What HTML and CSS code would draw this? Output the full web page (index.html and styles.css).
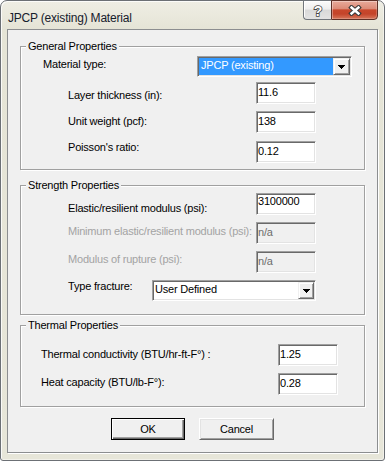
FILE: index.html
```html
<!DOCTYPE html>
<html lang="en">
<head>
<meta charset="utf-8">
<title>JPCP (existing) Material</title>
<link rel="stylesheet" href="styles.css">
</head>
<body>
<div class="window">
  <div class="titlebar">
    <span class="title">JPCP (existing) Material</span>
    <div class="caption-btns">
      <div class="cap-help">
        <svg width="12" height="15" viewBox="0 0 12 15"><text x="6" y="13" text-anchor="middle" font-family="Liberation Sans, Arial, sans-serif" font-weight="bold" font-size="14" fill="#ffffff" stroke="#474747" stroke-width="1.6" paint-order="stroke">?</text></svg>
      </div>
      <div class="cap-close">
        <svg width="14" height="11" viewBox="0 0 14 11"><path d="M3.5 2.5 L10.5 8.5 M10.5 2.5 L3.5 8.5" stroke="#3a3a3a" stroke-width="4.6" stroke-linecap="square" fill="none"/><path d="M3.5 2.5 L10.5 8.5 M10.5 2.5 L3.5 8.5" stroke="#ffffff" stroke-width="2.4" stroke-linecap="square" fill="none"/></svg>
      </div>
    </div>
  </div>
  <div class="client">
    <section class="group group--general">
      <span class="legend">General Properties</span>
      <div class="row row--material">
        <span class="label label--p2">Material type:</span>
        <div class="combo combo--material">
          <span class="combo-value combo-value--selected">JPCP (existing)</span>
          <span class="combo-btn"><svg width="7" height="4" viewBox="0 0 7 4"><path d="M0 0h7v1H0z M1 1h5v1H1z M2 2h3v1H2z M3 3h1v1H3z" fill="#000"/></svg></span>
        </div>
      </div>
      <div class="row row--indent row--gap5">
        <span class="label label--p7">Layer thickness (in):</span>
        <input class="edit" type="text" value="11.6">
      </div>
      <div class="row row--indent">
        <span class="label label--p4">Unit weight (pcf):</span>
        <input class="edit" type="text" value="138">
      </div>
      <div class="row row--indent row--gap8">
        <span class="label label--p0">Poisson's ratio:</span>
        <input class="edit" type="text" value="0.12">
      </div>
    </section>

    <section class="group group--strength">
      <span class="legend">Strength Properties</span>
      <div class="row row--indent">
        <span class="label label--p9">Elastic/resilient modulus (psi):</span>
        <input class="edit edit--high" type="text" value="3100000">
      </div>
      <div class="row row--indent">
        <span class="label label--p3 label--disabled">Minimum elastic/resilient modulus (psi):</span>
        <input class="edit" type="text" value="n/a" disabled>
      </div>
      <div class="row row--indent">
        <span class="label label--p2 label--disabled">Modulus of rupture (psi):</span>
        <input class="edit" type="text" value="n/a" disabled>
      </div>
      <div class="row row--indent row--fracture">
        <span class="label label--p0">Type fracture:</span>
        <div class="combo combo--fracture">
          <span class="combo-value">User Defined</span>
          <span class="combo-btn"><svg width="7" height="4" viewBox="0 0 7 4"><path d="M0 0h7v1H0z M1 1h5v1H1z M2 2h3v1H2z M3 3h1v1H3z" fill="#000"/></svg></span>
        </div>
      </div>
    </section>

    <section class="group group--thermal">
      <span class="legend">Thermal Properties</span>
      <div class="row row--thermal">
        <span class="label label--p4">Thermal conductivity (BTU/hr-ft-F°) :</span>
        <input class="edit" type="text" value="1.25">
      </div>
      <div class="row row--thermal">
        <span class="label label--p3">Heat capacity (BTU/lb-F°):</span>
        <input class="edit" type="text" value="0.28">
      </div>
    </section>

    <div class="buttons">
      <button class="btn btn--default" type="button">OK</button>
      <button class="btn" type="button">Cancel</button>
    </div>
  </div>
</div>
</body>
</html>
```

FILE: styles.css
```css
body {
  margin: 0;
  background: #ffffff;
  font-family: "Liberation Sans", Arial, sans-serif;
}

.window {
  box-sizing: border-box;
  width: 385px;
  height: 461px;
  border: 1px solid #6c7075;
  border-radius: 7px 7px 3px 3px;
  background: linear-gradient(to bottom, #efeee4 0px, #e5e4d6 28px, #e7e6d9 100%);
  box-shadow: inset 1px 1px 0 rgba(255, 255, 255, 0.8), inset -1px -1px 0 rgba(255, 255, 255, 0.45);
  display: flex;
  flex-direction: column;
  position: relative;
}

.titlebar {
  box-sizing: border-box;
  height: 28px;
  flex: none;
  padding: 7px 0 0 7px;
}

.title {
  font-size: 12px;
  line-height: 15px;
  letter-spacing: -0.2px;
  color: #16202c;
  white-space: nowrap;
}

.caption-btns {
  position: absolute;
  top: -1px;
  right: 6px;
  display: flex;
}

.cap-help {
  box-sizing: border-box;
  width: 28px;
  height: 20px;
  border: 1px solid #71767c;
  border-right: none;
  border-radius: 0 0 0 4px;
  background: linear-gradient(to bottom, #fbfbfb 0%, #eeeeee 45%, #d9d9d9 50%, #e3e3e3 100%);
  box-shadow: inset 1px 1px 0 rgba(255, 255, 255, 0.9);
  display: flex;
  align-items: center;
  justify-content: center;
}

.cap-close {
  box-sizing: border-box;
  width: 47px;
  height: 20px;
  border: 1px solid #5e3027;
  border-radius: 0 0 4px 0;
  background: linear-gradient(to bottom, #e8aa9b 0%, #dc8b78 42%, #c8472c 50%, #c4442a 72%, #d7765a 100%);
  box-shadow: inset 1px 1px 0 rgba(255, 255, 255, 0.35), inset -1px -1px 0 rgba(255, 255, 255, 0.2);
  display: flex;
  align-items: center;
  justify-content: center;
}

.client {
  flex: 1;
  margin: 0 6px 7px 6px;
  border: 1px solid #8c8e90;
  box-shadow: 1px 1px 0 #ffffff;
  background: #f0f0f0;
  padding: 0 12px;
  display: flex;
  flex-direction: column;
}

.group {
  position: relative;
  border: 1px solid #a0a0a0;
  box-shadow: inset 1px 1px 0 #ffffff, 1px 1px 0 #ffffff;
  display: flex;
  flex-direction: column;
}

.group--general {
  margin-top: 16px;
  padding: 9px 0 6px;
}

.group--strength {
  margin-top: 15px;
  padding: 7px 0 13px;
}

.group--thermal {
  margin-top: 10px;
  padding: 18px 0 11px;
}

.legend {
  position: absolute;
  top: -7px;
  left: 5px;
  padding: 0 2px;
  background: #f0f0f0;
  font-size: 11px;
  line-height: 13px;
  letter-spacing: -0.2px;
  white-space: nowrap;
  color: #000000;
}

.row {
  display: flex;
  align-items: flex-start;
}

.row + .row {
  margin-top: 7px;
}

.row + .row--gap5 {
  margin-top: 5px;
}

.row + .row--gap8 {
  margin-top: 8px;
}

.label {
  flex: none;
  font-size: 11px;
  line-height: 13px;
  letter-spacing: -0.2px;
  white-space: nowrap;
  color: #000000;
}

.label--disabled {
  color: #a3a3a3;
}

.label--p0 { padding-top: 0; }
.label--p2 { padding-top: 2px; }
.label--p3 { padding-top: 3px; }
.label--p4 { padding-top: 4px; }
.label--p7 { padding-top: 7px; }
.label--p9 { padding-top: 9px; }

.row--material {
  padding-left: 22px;
}

.row--material .label {
  width: 154px;
}

.row--indent {
  padding-left: 47px;
}

.row--indent .label {
  width: 188px;
}

.row--fracture .label {
  width: 84px;
}

.row--thermal {
  padding-left: 20px;
}

.row--thermal .label {
  width: 237px;
}

.edit {
  box-sizing: border-box;
  flex: none;
  width: 60px;
  height: 22px;
  margin: 0;
  padding: 2px 1px 5px 1px;
  border: 1px solid;
  border-color: #a0a0a0 #ffffff #ffffff #a0a0a0;
  box-shadow: inset 1px 1px 0 #696969, inset -1px -1px 0 #e3e3e3;
  border-radius: 0;
  background: #ffffff;
  font-family: inherit;
  font-size: 11px;
  line-height: 13px;
  letter-spacing: -0.2px;
  color: #000000;
  outline: none;
}

.edit--high {
  padding-top: 0;
  padding-bottom: 7px;
}

.edit:disabled {
  background: #f0f0f0;
  color: #6d6d6d;
  opacity: 1;
}

.combo {
  box-sizing: border-box;
  flex: none;
  display: flex;
  height: 21px;
  padding: 1px;
  border: 1px solid;
  border-color: #a0a0a0 #ffffff #ffffff #a0a0a0;
  box-shadow: inset 1px 1px 0 #696969, inset -1px -1px 0 #e3e3e3;
  background: #ffffff;
}

.combo--material {
  width: 155px;
}

.combo--fracture {
  width: 164px;
}

.combo-value {
  flex: 1;
  min-width: 0;
  padding: 1px 0 0 2px;
  font-size: 11px;
  line-height: 13px;
  letter-spacing: -0.2px;
  white-space: nowrap;
  overflow: hidden;
  color: #000000;
}

.combo-value--selected {
  background: #3399ff;
  color: #ffffff;
}

.combo--fracture .combo-value {
  padding-left: 1px;
}

.combo-btn {
  box-sizing: border-box;
  flex: none;
  width: 16px;
  display: flex;
  align-items: center;
  justify-content: center;
  background: #f0f0f0;
  border: 1px solid;
  border-color: #f0f0f0 #696969 #696969 #f0f0f0;
  box-shadow: inset 1px 1px 0 #ffffff, inset -1px -1px 0 #a0a0a0;
}

.combo--material .combo-btn {
  width: 17px;
}

.combo-btn svg {
  display: block;
}

.buttons {
  display: flex;
  justify-content: center;
  gap: 14px;
  margin-top: 11px;
}

.btn {
  box-sizing: border-box;
  width: 75px;
  height: 22px;
  margin: 0;
  padding: 0;
  font-family: inherit;
  font-size: 11px;
  letter-spacing: -0.2px;
  color: #000000;
  background: #f0f0f0;
  border: 1px solid;
  border-color: #ffffff #696969 #696969 #ffffff;
  border-radius: 0;
  box-shadow: inset 1px 1px 0 #e3e3e3, inset -1px -1px 0 #a0a0a0;
}

.btn--default {
  width: 74px;
  border-color: #000000;
  box-shadow: inset 1px 1px 0 #ffffff, inset -1px -1px 0 #696969, inset -2px -2px 0 #a0a0a0;
}
```
